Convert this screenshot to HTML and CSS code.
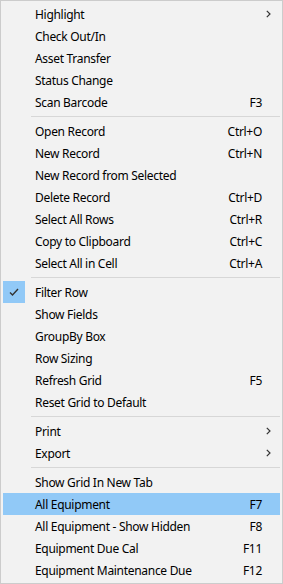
FILE: index.html
```
<!DOCTYPE html>
<html lang="en">

<head>
    <meta charset="utf-8">
    <meta name="viewport" content="width=device-width, initial-scale=1.0">
    <title>Grid menu</title>
    <link rel="stylesheet" href="styles.css">
</head>

<body>

    <nav class="menu">
        <div class="item"><span class="check"></span><span class="label">Highlight</span><svg class="arrow" width="5" height="8" viewBox="0 0 5 8"><polyline points="0.8,0.8 4,4 0.8,7.2" fill="none" stroke="#333" stroke-width="1.2"/></svg></div>
        <div class="item"><span class="check"></span><span class="label">Check Out/In</span></div>
        <div class="item"><span class="check"></span><span class="label">Asset Transfer</span></div>
        <div class="item"><span class="check"></span><span class="label">Status Change</span></div>
        <div class="item"><span class="check"></span><span class="label">Scan Barcode</span><span class="key">F3</span></div>

        <div class="sep"></div>

        <div class="item"><span class="check"></span><span class="label">Open Record</span><span class="key">Ctrl+O</span></div>
        <div class="item"><span class="check"></span><span class="label">New Record</span><span class="key">Ctrl+N</span></div>
        <div class="item"><span class="check"></span><span class="label">New Record from Selected</span></div>
        <div class="item"><span class="check"></span><span class="label">Delete Record</span><span class="key">Ctrl+D</span></div>
        <div class="item"><span class="check"></span><span class="label">Select All Rows</span><span class="key">Ctrl+R</span></div>
        <div class="item"><span class="check"></span><span class="label">Copy to Clipboard</span><span class="key">Ctrl+C</span></div>
        <div class="item"><span class="check"></span><span class="label">Select All in Cell</span><span class="key">Ctrl+A</span></div>

        <div class="sep"></div>

        <div class="item"><span class="check on"><svg width="22" height="22" viewBox="0 0 22 22"><polyline points="7,11.5 9.5,14 15,8" fill="none" stroke="#333" stroke-width="1.4"/></svg></span><span class="label">Filter Row</span></div>
        <div class="item"><span class="check"></span><span class="label">Show Fields</span></div>
        <div class="item"><span class="check"></span><span class="label">GroupBy Box</span></div>
        <div class="item"><span class="check"></span><span class="label">Row Sizing</span></div>
        <div class="item"><span class="check"></span><span class="label">Refresh Grid</span><span class="key">F5</span></div>
        <div class="item"><span class="check"></span><span class="label">Reset Grid to Default</span></div>

        <div class="sep"></div>

        <div class="item"><span class="check"></span><span class="label">Print</span><svg class="arrow" width="5" height="8" viewBox="0 0 5 8"><polyline points="0.8,0.8 4,4 0.8,7.2" fill="none" stroke="#333" stroke-width="1.2"/></svg></div>
        <div class="item"><span class="check"></span><span class="label">Export</span><svg class="arrow" width="5" height="8" viewBox="0 0 5 8"><polyline points="0.8,0.8 4,4 0.8,7.2" fill="none" stroke="#333" stroke-width="1.2"/></svg></div>

        <div class="sep"></div>

        <div class="item"><span class="check"></span><span class="label">Show Grid In New Tab</span></div>
        <div class="item hot"><span class="check"></span><span class="label">All Equipment</span><span class="key">F7</span></div>
        <div class="item"><span class="check"></span><span class="label">All Equipment - Show Hidden</span><span class="key">F8</span></div>
        <div class="item"><span class="check"></span><span class="label">Equipment Due Cal</span><span class="key">F11</span></div>
        <div class="item"><span class="check"></span><span class="label">Equipment Maintenance Due</span><span class="key">F12</span></div>
    </nav>

</body></html>
```

FILE: styles.css
```
body {
    margin: 0;
    background-color: #f2f2f2;
}

.menu {
    box-sizing: border-box;
    width: 283px;
    height: 584px;
    padding: 2px;
    border: 1px solid #cccccc;
    background-color: #f2f2f2;
    font-family: 'Noto Sans', 'Open Sans', sans-serif;
    font-size: 12px;
    letter-spacing: -0.3px;
    color: #000;
    display: flex;
    flex-direction: column;
}

.item {
    display: flex;
    align-items: center;
    height: 22px;
    padding-right: 9px;
}

.hot {
    background-color: #91c9f7;
}

.check {
    width: 22px;
    height: 22px;
    margin-right: 10px;
    flex-shrink: 0;
}

.check.on {
    background-color: #91c9f7;
}

.check svg {
    display: block;
}

.label {
    flex: 1;
    white-space: nowrap;
}

.key {
    margin-right: 9px;
}

.arrow {
    display: block;
}

.sep {
    height: 1px;
    margin: 3px 0 3px 28px;
    background-color: #d7d7d7;
}
```
